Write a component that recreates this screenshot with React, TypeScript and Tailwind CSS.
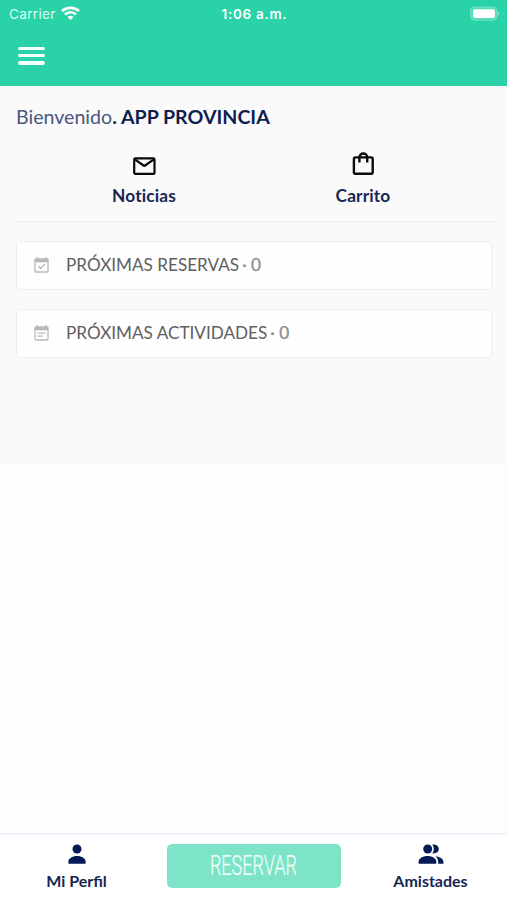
import type { ReactNode } from 'react';

function StatusBar() {
  return (
    <div className="grid h-7 grid-cols-3 items-center pr-[7px] pl-[9px] font-['Inter',sans-serif] text-white">
      <div className="flex items-center gap-[5px]">
        <span className="text-[13.5px] tracking-[0.35px] text-[#d9fff2]">Carrier</span>
        <svg className="-mt-[2px]" width="19" height="15" viewBox="0 0 19 15" fill="none" stroke="currentColor" strokeWidth="2.7">
          <path d="M1 5.1C5.7 .7 13.3 .7 18 5.1" />
          <path d="M4 8.4C7.1 5.5 11.9 5.5 15 8.4" />
          <path d="M9.5 14L6.5 11C8.1 9.3 10.9 9.3 12.5 11Z" fill="currentColor" stroke="none" />
        </svg>
      </div>
      <div className="text-center text-[13.5px] font-semibold tracking-[0.7px] whitespace-nowrap">1:06 a.m.</div>
      <svg className="-mt-[2px] justify-self-end" width="31" height="15" viewBox="0 0 31 15">
        <rect x="1.5" y="1.2" width="26.5" height="12.8" rx="4" fill="#4fdcb6" stroke="#7ae5c5" strokeWidth="1" />
        <rect x="4" y="3.3" width="22" height="8.6" rx="1.8" fill="#fff" />
        <path d="M29.2 6c1.4.7 1.4 2.7 0 3.4z" fill="#a8eed8" />
      </svg>
    </div>
  );
}

function MailIcon() {
  return (
    <svg width="24" height="24" viewBox="0 0 24 24" fill="none" stroke="#0b0b0b" strokeWidth="2.2" strokeLinejoin="round">
      <rect x="2.2" y="4.3" width="20.3" height="15.6" rx="1.2" />
      <path d="M2.8 5.3L12.3 12l9.6-6.7" />
    </svg>
  );
}

function BagIcon() {
  return (
    <svg width="24" height="24" viewBox="0 0 24 24" fill="none" stroke="#0b0b0b" strokeWidth="2.4">
      <rect x="2.9" y="5.4" width="18.8" height="16.4" rx="1.5" />
      <path d="M8.4 10.5V5.4a3.9 3.9 0 0 1 7.8 0v5.1" />
    </svg>
  );
}

function CalendarIcon({ children }: { children: ReactNode }) {
  return (
    <svg width="17" height="18" viewBox="0 0 17 18" fill="none" stroke="#b9b9b9" strokeWidth="1.3">
      <rect x="2" y="3" width="13" height="13" rx="1" />
      <path d="M1.6 4.7h13.8" strokeWidth="3.2" />
      <path d="M4.2 1.2v3M12.8 1.2v3" strokeWidth="1.6" />
      {children}
    </svg>
  );
}

function PersonIcon() {
  return (
    <svg width="18" height="20" viewBox="0 0 18 20" fill="#051b56">
      <circle cx="9" cy="5" r="4.5" />
      <path d="M.4 19.8v-2.2c0-3.7 5.2-5.5 8.6-5.5s8.6 1.8 8.6 5.5v2.2z" />
    </svg>
  );
}

function PeopleIcon() {
  return (
    <svg width="26" height="20" viewBox="0 0 26 20" fill="#051b56">
      <circle cx="9.7" cy="5" r="4.5" />
      <path d="M14.3.6c4.2-.2 6.5 1.7 6.5 4.4s-2.3 4.6-6.5 4.4c2-2.6 2-6.2 0-8.8z" />
      <path d="M.6 19.8v-2.2c0-3.7 5.6-5.5 8.9-5.5s8.8 1.8 8.8 5.5v2.2z" />
      <path d="M17.2 12.2c3.6.4 8.2 2 8.2 5.4v2.2h-5.3v-2.2c0-2.4-1.1-4-2.9-5.4z" />
    </svg>
  );
}

function Shortcut({ icon, label, className }: { icon: ReactNode; label: string; className: string }) {
  return (
    <button className={`flex flex-col items-center ${className}`}>
      {icon}
      <span className="text-[17.3px] leading-6 font-bold tracking-[0.15px] text-[#162653] [font-variant-ligatures:none]">{label}</span>
    </button>
  );
}

function Panel({ icon, label }: { icon: ReactNode; label: string }) {
  return (
    <section className="flex h-[49px] items-center rounded-[3px] border border-[#efefef] bg-[#fefefe] pb-px pl-4 text-[17.15px] text-[#606060]">
      {icon}
      <span className="ml-4">{label}</span>
      <span className="ml-[3px] text-[#8c8c8c] [-webkit-text-stroke:0.3px_#8c8c8c]">· 0</span>
    </section>
  );
}

export default function App() {
  return (
    <div className="flex h-[900px] w-[507px] flex-col overflow-hidden bg-[#fdfdfd] font-['Lato',sans-serif]">
      <header className="h-[86px] shrink-0 bg-[#29d2a7]">
        <StatusBar />
        <button className="mt-[18.5px] ml-[18px] flex w-[27px] flex-col gap-1" aria-label="Menú">
          <span className="h-[3.4px] rounded-full bg-[#f2fffb]" />
          <span className="h-[3.4px] rounded-full bg-[#f2fffb]" />
          <span className="h-[3.4px] rounded-full bg-[#f2fffb]" />
        </button>
      </header>
      <main className="h-[378px] shrink-0 bg-[#fafafa] px-4 pt-[18px]">
        <h1 className="text-[19.6px] leading-[26px] text-[#4c587e]">
          Bienvenido<b className="text-[#101f50]">. APP PROVINCIA</b>
        </h1>
        <nav className="-ml-4 flex h-[91px] w-[507px]">
          <Shortcut icon={<MailIcon />} label="Noticias" className="w-[288px] gap-[6px] pt-6" />
          <Shortcut icon={<BagIcon />} label="Carrito" className="w-[150px] gap-2 pt-[22px]" />
        </nav>
        <hr className="w-[478px] border-[#ececec]" />
        <div className="mt-[19px] flex w-[476px] flex-col gap-[19px]">
          <Panel
            icon={<CalendarIcon><path d="M5.3 10.2l2.3 2.3 4.1-4.3" /></CalendarIcon>}
            label="PRÓXIMAS RESERVAS"
          />
          <Panel
            icon={<CalendarIcon><path d="M4.5 9.2h8M4.5 12.2h5.3" /></CalendarIcon>}
            label="PRÓXIMAS ACTIVIDADES"
          />
        </div>
      </main>
      <div className="flex-1" />
      <footer className="flex h-[67px] shrink-0 border-t-2 border-[#eff1fa] bg-white">
        <button className="flex w-[153px] flex-col items-center pt-[9px] text-[16px] leading-5 font-bold text-[#162653]">
          <PersonIcon />
          <span className="mt-[7px]">Mi Perfil</span>
        </button>
        <button className="mt-[9px] ml-[13.5px] flex h-11 w-[174px] items-center justify-center rounded-[5px] bg-[#7de4c7]">
          <span className="origin-center scale-x-[0.655] font-['Roboto',sans-serif] text-[27.5px] font-light text-[#f0fffb] [-webkit-text-stroke:0.2px_#f0fffb]">RESERVAR</span>
        </button>
        <button className="ml-[14px] flex w-[152px] flex-col items-center pt-[9px] text-[16px] leading-5 font-bold text-[#162653]">
          <PeopleIcon />
          <span className="mt-[7px]">Amistades</span>
        </button>
      </footer>
    </div>
  );
}
